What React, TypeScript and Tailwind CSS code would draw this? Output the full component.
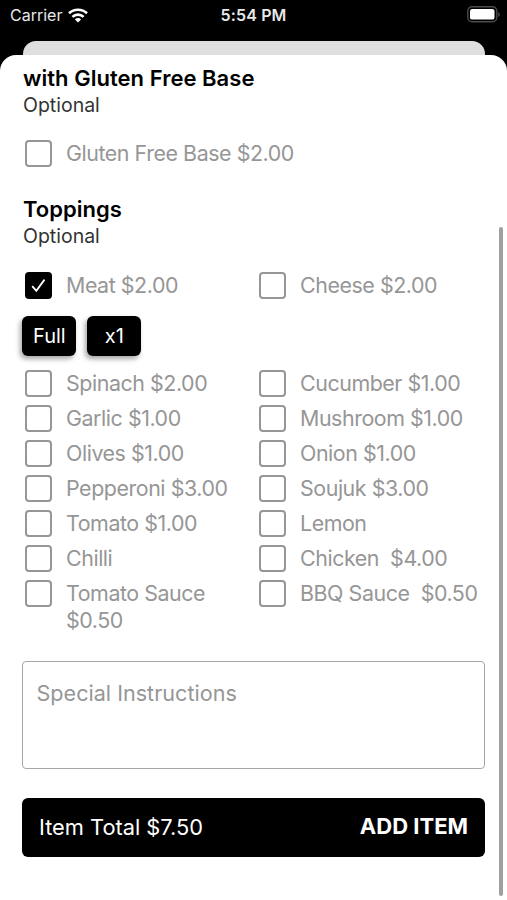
import { useState } from "react";

const BASES = ["Gluten Free Base $2.00"];

const FEATURED = ["Meat $2.00", "Cheese $2.00"];

const TOPPINGS = [
  "Spinach $2.00",
  "Cucumber $1.00",
  "Garlic $1.00",
  "Mushroom $1.00",
  "Olives $1.00",
  "Onion $1.00",
  "Pepperoni $3.00",
  "Soujuk $3.00",
  "Tomato $1.00",
  "Lemon",
  "Chilli",
  "Chicken  $4.00",
  "Tomato Sauce $0.50",
  "BBQ Sauce  $0.50",
];

export default function App() {
  const [selected, setSelected] = useState<string[]>(["Meat $2.00"]);

  const toggle = (name: string) => {
    setSelected((prev) =>
      prev.includes(name) ? prev.filter((n) => n !== name) : [...prev, name]
    );
  };

  const renderOption = (name: string) => (
    <Option key={name} label={name} checked={selected.includes(name)} onToggle={() => toggle(name)} />
  );

  return (
    <div className="relative flex h-[900px] w-[507px] flex-col overflow-hidden bg-black font-['Inter','Liberation_Sans',sans-serif]">
      <StatusBar />
      <div className="mx-[22.5px] h-[14px] shrink-0 rounded-t-[13px] bg-[#dfdfdf]" />

      <div className="flex-1 rounded-t-[16px] bg-white px-[22px] pt-[10px]">
        <SectionTitle title="with Gluten Free Base" />
        <div className="mt-[17px] grid grid-cols-1">{BASES.map(renderOption)}</div>

        <div className="mt-[25px]">
          <SectionTitle title="Toppings" />
        </div>
        <div className="mt-[18px] grid grid-cols-[234px_1fr]">{FEATURED.map(renderOption)}</div>

        <div className="mt-[13px] flex gap-[11px] pl-[0.4px]">
          <Chip label="Full" />
          <Chip label="x1" />
        </div>

        <div className="mt-[10px] grid grid-cols-[234px_1fr]">{TOPPINGS.map(renderOption)}</div>

        <textarea
          placeholder="Special Instructions"
          className="mt-[27.5px] block h-[108px] w-full resize-none rounded-[4px] border-[1.5px] border-[#a6a6a6] px-[13.5px] pt-[18px] text-[21.6px] leading-[27px] placeholder:text-[#969696]"
        />

        <button className="mt-[29px] flex h-[59px] w-full items-center justify-between rounded-[6px] bg-black pr-[17px] pl-[17px] text-[21.8px] text-white">
          <span>Item Total $7.50</span>
          <span className="pb-[2px] text-[22px] font-bold">ADD ITEM</span>
        </button>
      </div>

      <div className="absolute top-[227px] right-[4px] h-[669px] w-[4px] rounded-full bg-[#a0a0a0]" />
    </div>
  );
}

function StatusBar() {
  return (
    <div className="grid h-[41px] shrink-0 grid-cols-3 items-start pt-[5px] pr-[7px] pl-[10px] text-[16px] leading-5 text-[#e8e8e8]">
      <div className="flex items-center gap-[6px]">
        <span>Carrier</span>
        <svg width="20" height="15" viewBox="0 0 20 15" fill="none" stroke="white" strokeWidth="2.6">
          <path d="M1 5.3a13 13 0 0 1 18 0" />
          <path d="M4.4 8.9a8 8 0 0 1 11.2 0" />
          <path d="M10 14.6 6.9 11.4a4.4 4.4 0 0 1 6.2 0Z" fill="white" stroke="none" />
        </svg>
      </div>
      <span className="-ml-[3px] text-center font-semibold tracking-[0.15px]">5:54 PM</span>
      <div className="flex justify-end pt-[1px]">
        <svg width="33" height="17" viewBox="0 0 33 17" fill="none">
          <rect x="0.8" y="0.8" width="29" height="15" rx="4.2" stroke="#4a4a4a" strokeWidth="1.4" />
          <rect x="3" y="3" width="24.5" height="10.6" rx="2.2" fill="white" />
          <path d="M31.2 6v5c1.2-.5 1.6-1.5 1.6-2.5s-.4-2-1.6-2.5Z" fill="#4a4a4a" />
        </svg>
      </div>
    </div>
  );
}

function SectionTitle({ title }: { title: string }) {
  return (
    <div className="pl-[1px] leading-[27px]">
      <h2 className="text-[22px] font-semibold tracking-[0.03px] text-black">{title}</h2>
      <p className="text-[19.5px] text-[#333333]">Optional</p>
    </div>
  );
}

function Option({ label, checked, onToggle }: { label: string; checked: boolean; onToggle: () => void }) {
  return (
    <button
      onClick={onToggle}
      className="flex min-h-[35px] items-start gap-[14px] pt-[4px] pl-[3px] text-left"
    >
      {checked ? (
        <span className="flex size-[27px] shrink-0 items-center justify-center rounded-[4px] bg-black">
          <svg width="15" height="15" viewBox="0 0 15 15" fill="none" stroke="white" strokeWidth="1.8">
            <path d="M1.2 8.2 5.3 12.8 13.5 1.6" />
          </svg>
        </span>
      ) : (
        <span className="size-[27px] shrink-0 rounded-[4px] border-2 border-[#969696]" />
      )}
      <span className="text-[21.4px] leading-[26.5px] tracking-[-0.44px] whitespace-pre-wrap text-[#969696]">
        {label}
      </span>
    </button>
  );
}

function Chip({ label }: { label: string }) {
  return (
    <button className="h-[40px] w-[54px] rounded-[6px] bg-black text-[20px] text-white shadow-[-2px_3px_5px_rgba(0,0,0,0.35)]">
      {label}
    </button>
  );
}
